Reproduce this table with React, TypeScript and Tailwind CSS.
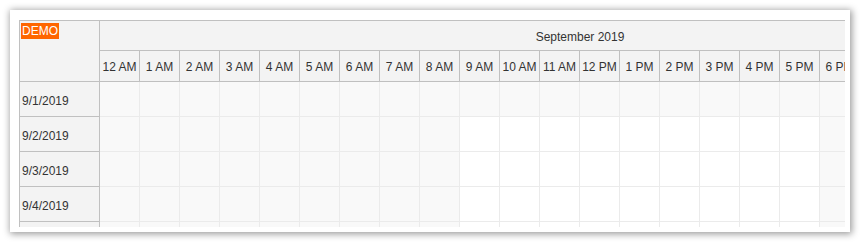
import React from 'react';

const hours = [
  '12 AM', '1 AM', '2 AM', '3 AM', '4 AM', '5 AM', '6 AM', '7 AM', '8 AM', '9 AM', '10 AM', '11 AM',
  '12 PM', '1 PM', '2 PM', '3 PM', '4 PM', '5 PM', '6 PM', '7 PM', '8 PM', '9 PM', '10 PM', '11 PM',
];

interface Day {
  label: string;
  businessDay: boolean;
}

const days: Day[] = [
  { label: '9/1/2019', businessDay: false },
  { label: '9/2/2019', businessDay: true },
  { label: '9/3/2019', businessDay: true },
  { label: '9/4/2019', businessDay: true },
  { label: '9/5/2019', businessDay: true },
];

// business hours: 9 AM - 6 PM
const isBusinessHour = (h: number) => h >= 9 && h < 18;

const App: React.FC = () => {
  return (
    <div className="w-[860px] h-[242px] bg-white pt-[10px] pl-[10px] font-['Liberation_Sans',Arial,sans-serif] text-[12px] text-[#333]">
      <div className="w-[840px] h-[222px] bg-white pl-[9px] pt-[10px] shadow-[1px_1px_7px_1px_rgba(0,0,0,0.4)]">
        <div className="w-[826px] h-[207px] overflow-hidden border-t border-l border-[#c0c0c0] flex flex-col">
          {/* header */}
          <div className="flex shrink-0">
            <div className="w-[80px] h-[61px] shrink-0 bg-[#f3f3f3] border-r border-b border-[#c0c0c0] pl-[1px] pt-[1px]">
              <span className="inline-block bg-[#ff6600] text-white px-[1px] leading-[16px]">DEMO</span>
            </div>
            <div className="flex-1 overflow-hidden">
              <div className="w-[960px] bg-[#f3f3f3]">
                <div className="h-[30px] border-b border-[#c0c0c0] flex items-center justify-center pt-[2px]">
                  September 2019
                </div>
                <div className="flex h-[31px] border-b border-[#c0c0c0]">
                  {hours.map((h) => (
                    <div key={h} className="w-[40px] shrink-0 border-r border-[#c0c0c0] flex items-center justify-center whitespace-nowrap pt-[2px]">
                      {h}
                    </div>
                  ))}
                </div>
              </div>
            </div>
          </div>

          {/* rows */}
          <div className="flex flex-1 min-h-0">
            <div className="w-[80px] shrink-0">
              {days.map((d) => (
                <div key={d.label} className="h-[35px] bg-[#f3f3f3] border-r border-b border-[#c0c0c0] flex items-center pl-[2px] pt-[3px]">
                  {d.label}
                </div>
              ))}
            </div>
            <div className="flex-1 overflow-hidden">
              <div className="w-[960px]">
                {days.map((d) => (
                  <div key={d.label} className="flex h-[35px]">
                    {hours.map((h, i) => (
                      <div
                        key={h}
                        className={
                          'w-[40px] shrink-0 border-r border-b border-[#ebebeb] ' +
                          (d.businessDay && isBusinessHour(i) ? 'bg-white' : 'bg-[#f9f9f9]')
                        }
                      />
                    ))}
                  </div>
                ))}
              </div>
            </div>
          </div>
        </div>
      </div>
    </div>
  );
};

export default App;
